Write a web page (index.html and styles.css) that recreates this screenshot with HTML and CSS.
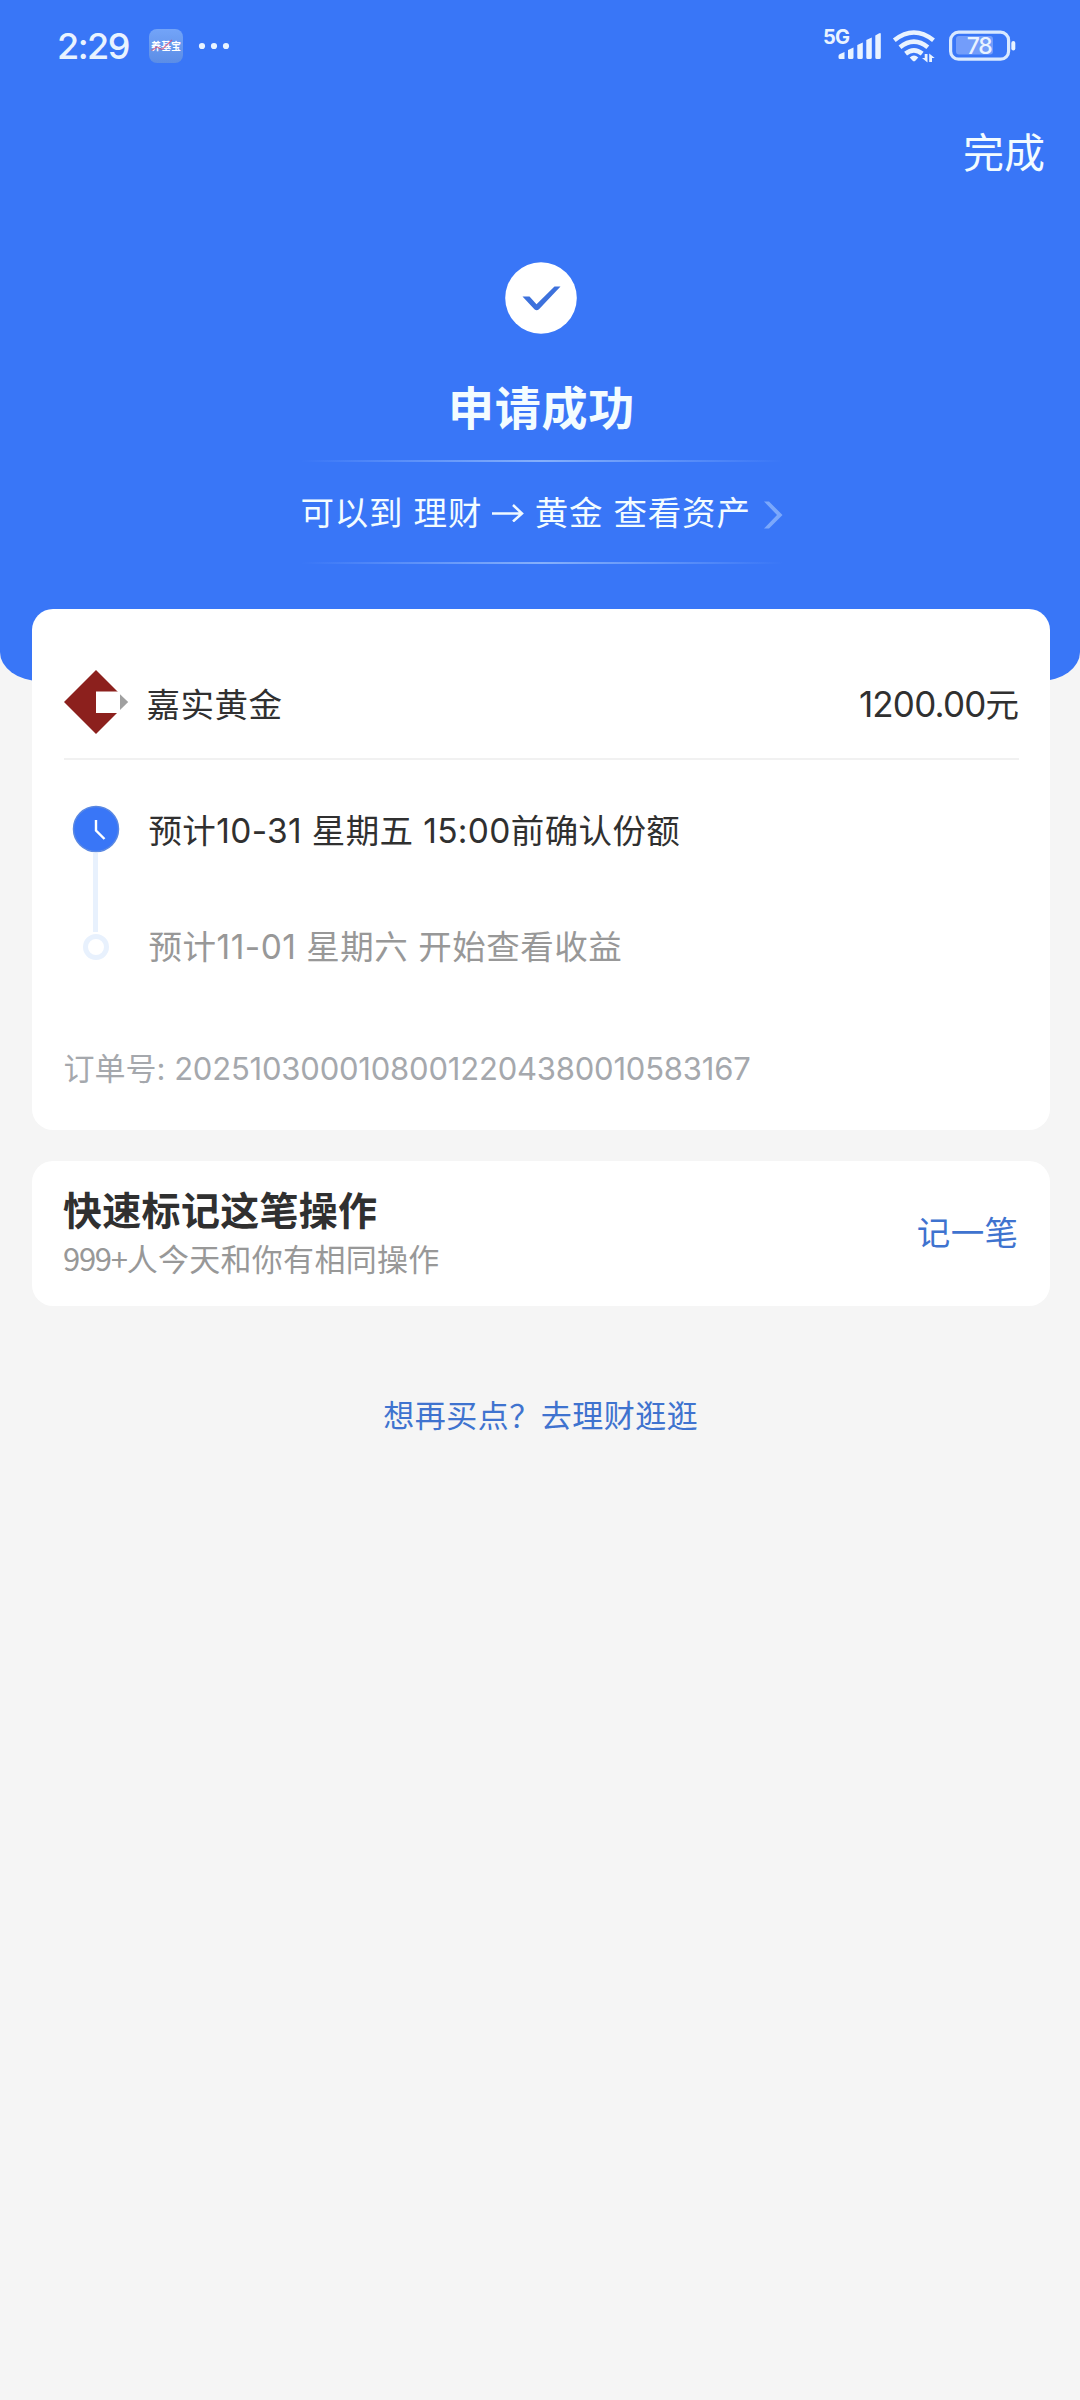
FILE: index.html
```html
<!DOCTYPE html>
<html lang="zh-CN">
<head>
<meta charset="UTF-8">
<title>申请成功</title>
<link rel="stylesheet" href="styles.css">
</head>
<body>
<header class="hero">
  <div class="status">
    <div class="status-left">
      <span class="clock">2:29</span>
      <span class="app-icon"><span class="app-name">养基宝</span>
        <svg class="app-trend" viewBox="0 0 34 34"><path d="M2.500 21.500L8 18l5 2.500L23 11" fill="none" stroke="#d8446b" stroke-width="1.300" opacity=".7"/></svg>
      </span>
      <svg class="dots" width="32" height="8" viewBox="0 0 32 8"><circle cx="4" cy="4" r="3.1"/><circle cx="16" cy="4" r="3.1"/><circle cx="28" cy="4" r="3.1"/></svg>
    </div>
    <svg class="status-right" width="196" height="40" viewBox="822 26 196 40">
      <text x="823" y="43.8" class="net">5G</text>
      <g class="ink">
        <path d="M838.500 56q0-1.500 1.500-2l4.500-2v7h-4.500q-1.500 0-1.500-1.500zM848 50l5.500-2.500v10q0 1.500-1.500 1.500h-2.500q-1.500 0-1.500-1.500zM857.300 45l5.500-2.500v15q0 1.500-1.500 1.500h-2.500q-1.500 0-1.500-1.500zM866.300 40l5.500-2.500v20q0 1.500-1.500 1.500h-2.500q-1.500 0-1.500-1.500zM875.300 35.500l3.500-2q2-1 2 .500v23.500q0 1.500-1.500 1.500h-2.500q-1.500 0-1.500-1.500z"/>
        <path d="M909.700 57.500q4.300-4 8.600 0l-3 3.300q-1.300 1-2.600 0z"/>
        <path d="M927.500 54v8.500l-5.500-4.500h2.700V54zM929.200 62V53.500l5.500 4.500H932v4z"/>
        <rect x="1011.300" y="41" width="4" height="9.500" rx="2"/>
      </g>
      <g fill="none" stroke="#e9f3ff" stroke-width="4.600">
        <path d="M894.300 40.200q19.600-15.400 39.200 0"/>
        <path d="M900 47.200q13.900-11.200 27.800 0"/>
        <path d="M905.600 53.600q8.300-6.600 16.600 0"/>
      </g>
      <rect x="956" y="36" width="37" height="18.500" rx="3" fill="#739dfa"/>
      <rect x="950.600" y="32.200" width="58" height="27" rx="8" fill="none" stroke="#d9e9ff" stroke-width="3.200"/>
      <text x="979" y="54" class="pct" text-anchor="middle">78</text>
    </svg>
  </div>
  <nav class="nav"><a class="done">完成</a></nav>
  <svg class="check" width="72" height="72" viewBox="0 0 72 72"><circle cx="36" cy="36" r="35.800" fill="#fff"/><path d="M17.500 34.500h7l7 7.700 18-17.700h6L34 47.300q-2.300 2-4.600 0z" fill="#3d71dc"/></svg>
  <h1 class="title">申请成功</h1>
  <div class="hint">
    <span class="hint-text">可以到 理财 <svg class="arrow" width="32" height="18" viewBox="0 0 32 18"><path d="M0 9.500h29.500M21 1l9 8.500-9 8" fill="none" stroke="#f0f9ff" stroke-width="2.500"/></svg> 黄金 查看资产</span>
    <svg class="chev" width="20" height="28" viewBox="0 0 20 28"><path d="M1 .500h5L19.500 14 6 27.500H1L14 14z" fill="#7ba8fb"/></svg>
  </div>
</header>
<main class="content">
  <section class="card order">
    <div class="product">
      <svg width="65" height="64" viewBox="0 0 65 64"><path d="M32 0L64 32 32 64 0 32z" fill="#8c201d"/><path d="M32 21.500h32V43H32z" fill="#fff"/><path d="M56 24.200L64.200 32 56 40z" fill="#a0a0a0"/></svg>
      <span class="name">嘉实黄金</span>
      <span class="amount"><span class="num">1200.00</span>元</span>
    </div>
    <ol class="steps">
      <li class="step">
        <svg class="mark" width="48" height="48" viewBox="0 0 48 48"><circle cx="24" cy="24" r="22.500" fill="#3976f7" stroke="#5a88e2" stroke-width="1.500"/><path d="M24 15v10.500l8.500 8.500" fill="none" stroke="#fff" stroke-width="2.400"/></svg>
        <span class="l1">预计<span class="num">10-31</span> 星期五 <span class="num">15:00</span>前确认份额</span>
      </li>
      <li class="rail"></li>
      <li class="step later">
        <span class="mark"><i class="ring"></i></span>
        <span class="l2">预计<span class="num">11-01</span> 星期六 开始查看收益</span>
      </li>
    </ol>
    <p class="order-no">订单号: <span class="num">20251030001080012204380010583167</span></p>
  </section>
  <section class="card note">
    <div>
      <h2 class="note-title">快速标记这笔操作</h2>
      <p class="note-sub"><span class="num">999+</span>人今天和你有相同操作</p>
    </div>
    <a class="note-link">记一笔</a>
  </section>
  <a class="more">想再买点？去理财逛逛</a>
</main>
</body>
</html>
```

FILE: styles.css
```css
* { box-sizing: border-box; margin: 0; padding: 0; }
body {
  width: 1080px;
  min-height: 2400px;
  background: #f5f5f5;
  font-family: Inter, "Noto Sans CJK SC", sans-serif;
  color: #303030;
  white-space: nowrap;
}
.hero {
  height: 681px;
  background: #3976f7;
  border-radius: 0 0 40px 40px / 0 0 29px 29px;
  color: #f3fcff;
  display: flex;
  flex-direction: column;
  align-items: center;
}
.status {
  width: 100%;
  height: 92px;
  padding: 0 62px 0 57px;
  display: flex;
  align-items: center;
  justify-content: space-between;
}
.status-left { display: flex; align-items: center; }
.clock { width: 92px; font-size: 36px; font-weight: 500; line-height: 40px; color: #e9f3ff; letter-spacing: -1.500px; }
.app-icon {
  position: relative;
  width: 34px;
  height: 34px;
  border-radius: 8px;
  background: linear-gradient(#73a4f8, #5b8de6);
  display: flex;
  align-items: center;
  justify-content: center;
}
.app-name { font-size: 10px; font-weight: 700; line-height: 12px; color: #fff; }
.app-trend { position: absolute; inset: 0; }
.dots { margin-left: 15px; fill: #e9f3ff; }
.ink { fill: #e9f3ff; }
.net { font-size: 20px; font-weight: 700; fill: #e9f3ff; letter-spacing: -.8px; }
.pct { font-size: 23px; font-weight: 500; fill: #e9f3ff; letter-spacing: -1.500px; }
.nav { width: 100%; padding: 31px 35px 0 0; display: flex; justify-content: flex-end; }
.done { font-size: 41px; line-height: 60px; }
.check { margin: 79px 0 0 2px; }
.title { margin: 44px 0 0 3px; font-size: 46px; font-weight: 700; line-height: 60px; letter-spacing: .7px; }
.hint {
  width: 482px;
  height: 104px;
  margin: 22px 0 0 3px;
  display: flex;
  align-items: center;
  background:
    linear-gradient(90deg, transparent, #86b0fb 50%, transparent) top / 100% 2px no-repeat,
    linear-gradient(90deg, transparent, #86b0fb 50%, transparent) bottom / 100% 2px no-repeat;
}
.hint-text { padding-top: 1px; font-size: 33.500px; line-height: 50px; letter-spacing: .8px; }
.arrow { vertical-align: 3px; }
.chev { margin: 5px 0 0 auto; }
.content { padding: 0 30px 0 31.500px; margin-top: -72px; display: flex; flex-direction: column; }
.card { background: #fff; border-radius: 21px; }
.order { height: 520.500px; padding: 36px 31px 0 32px; }
.product {
  height: 115px;
  border-bottom: 2px solid #f1f1f1;
  display: flex;
  align-items: center;
}
.name { margin: 6px 0 0 18px; font-size: 33.500px; letter-spacing: .5px; line-height: 50px; }
.amount { margin: 6px 0 0 auto; font-size: 33.500px; line-height: 50px; }
.amount .num { font-size: 35px; letter-spacing: -.8px; }
.steps { list-style: none; margin-top: 45px; }
.step { height: 48px; display: flex; align-items: center; font-size: 33.500px; line-height: 50px; }
.l1 { padding-top: 4px; letter-spacing: .35px; }
.l2 { letter-spacing: .5px; }
.mark { width: 48px; margin: 0 29px 0 8px; display: flex; justify-content: center; flex: none; }
.rail { width: 5px; height: 79px; margin-left: 29.500px; background: #e8f1fd; }
.later { height: 30px; color: #989898; }
.ring { width: 26px; height: 26px; border: 5px solid #e8f1fd; border-radius: 50%; }
.order-no { margin-top: 82px; font-size: 31px; line-height: 50px; color: #a5a8ad; }
.order-no .num { letter-spacing: -.2px; }
.note { height: 145px; margin-top: 31px; padding: 0 31.500px; display: flex; align-items: center; justify-content: space-between; }
.note-title { font-size: 39px; line-height: 54px; font-weight: 700; letter-spacing: .3px; color: #303030; }
.note-sub { font-size: 31px; line-height: 44px; color: #989898; letter-spacing: .3px; }
.note-sub .num { font-family: "Noto Sans CJK SC", sans-serif; line-height: 1; letter-spacing: -1.300px; }
.note-link { font-size: 33.500px; line-height: 50px; letter-spacing: .4px; color: #3f73cf; }
.more { margin: 85px auto 0; font-size: 31px; line-height: 50px; letter-spacing: .5px; color: #3f73cf; }
```
